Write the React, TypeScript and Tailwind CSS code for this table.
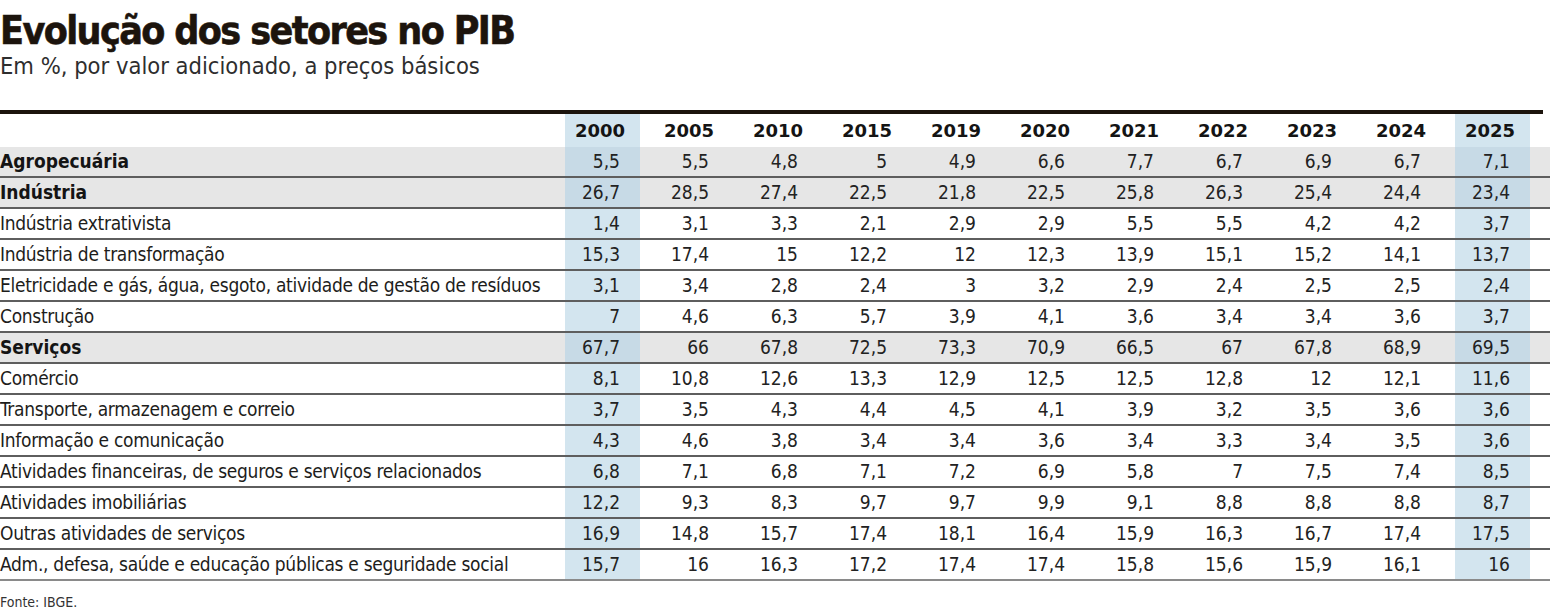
const years = ["2000", "2005", "2010", "2015", "2019", "2020", "2021", "2022", "2023", "2024", "2025"];

interface Row {
  label: string;
  values: string[];
  section?: boolean;
}

const rows: Row[] = [
  { label: "Agropecuária", section: true, values: ["5,5", "5,5", "4,8", "5", "4,9", "6,6", "7,7", "6,7", "6,9", "6,7", "7,1"] },
  { label: "Indústria", section: true, values: ["26,7", "28,5", "27,4", "22,5", "21,8", "22,5", "25,8", "26,3", "25,4", "24,4", "23,4"] },
  { label: "Indústria extrativista", values: ["1,4", "3,1", "3,3", "2,1", "2,9", "2,9", "5,5", "5,5", "4,2", "4,2", "3,7"] },
  { label: "Indústria de transformação", values: ["15,3", "17,4", "15", "12,2", "12", "12,3", "13,9", "15,1", "15,2", "14,1", "13,7"] },
  { label: "Eletricidade e gás, água, esgoto, atividade de gestão de resíduos", values: ["3,1", "3,4", "2,8", "2,4", "3", "3,2", "2,9", "2,4", "2,5", "2,5", "2,4"] },
  { label: "Construção", values: ["7", "4,6", "6,3", "5,7", "3,9", "4,1", "3,6", "3,4", "3,4", "3,6", "3,7"] },
  { label: "Serviços", section: true, values: ["67,7", "66", "67,8", "72,5", "73,3", "70,9", "66,5", "67", "67,8", "68,9", "69,5"] },
  { label: "Comércio", values: ["8,1", "10,8", "12,6", "13,3", "12,9", "12,5", "12,5", "12,8", "12", "12,1", "11,6"] },
  { label: "Transporte, armazenagem e correio", values: ["3,7", "3,5", "4,3", "4,4", "4,5", "4,1", "3,9", "3,2", "3,5", "3,6", "3,6"] },
  { label: "Informação e comunicação", values: ["4,3", "4,6", "3,8", "3,4", "3,4", "3,6", "3,4", "3,3", "3,4", "3,5", "3,6"] },
  { label: "Atividades financeiras, de seguros e serviços relacionados", values: ["6,8", "7,1", "6,8", "7,1", "7,2", "6,9", "5,8", "7", "7,5", "7,4", "8,5"] },
  { label: "Atividades imobiliárias", values: ["12,2", "9,3", "8,3", "9,7", "9,7", "9,9", "9,1", "8,8", "8,8", "8,8", "8,7"] },
  { label: "Outras atividades de serviços", values: ["16,9", "14,8", "15,7", "17,4", "18,1", "16,4", "15,9", "16,3", "16,7", "17,4", "17,5"] },
  { label: "Adm., defesa, saúde e educação públicas e seguridade social", values: ["15,7", "16", "16,3", "17,2", "17,4", "17,4", "15,8", "15,6", "15,9", "16,1", "16"] },
];

const isHighlight = (i: number) => i === 0 || i === years.length - 1;

export default function App() {
  return (
    <div className="w-[1550px] h-[609px] overflow-hidden bg-white text-[#1d1d1b] font-['DejaVu_Sans_Condensed','DejaVu_Sans',sans-serif]">
      {/* Title */}
      <h1 className="pt-[11px] text-[39px] leading-[40px] font-bold tracking-[-1.6px] text-[#1c140d] [-webkit-text-stroke:0.6px_#1c140d]">
        Evolução dos setores no PIB
      </h1>
      <p className="mt-[2px] text-[23.5px] leading-[26px] text-[#2e2e2e]">Em %, por valor adicionado, a preços básicos</p>

      <div className="mt-[31px] w-[1543px] h-[4px] bg-[#1c140d]" />

      {/* Header */}
      <div className="grid grid-cols-[565px_repeat(11,89px)] h-[33px]">
        <div />
        {years.map((y, i) => (
          <div
            key={y}
            className={`w-[75px] h-full flex items-center justify-end pr-[15px] text-[18px] font-bold font-['DejaVu_Sans',sans-serif] text-[#141414] ${
              isHighlight(i) ? "bg-[#d3e5ef]" : ""
            }`}
          >
            {y}
          </div>
        ))}
      </div>

      {/* Rows */}
      <div>
        {rows.map((row, ri) => {
          const last = ri === rows.length - 1;
          return (
            <div
              key={row.label}
              className={`grid grid-cols-[565px_repeat(11,89px)] h-[31px] border-b-2 ${
                last ? "border-[#8a8a8a]" : "border-[#5e5e5e]"
              } ${row.section ? "bg-[#e6e6e6]" : "bg-white"}`}
            >
              <div
                className={`flex items-center whitespace-nowrap text-[19px] ${
                  row.section ? "font-bold text-[#141414]" : "tracking-[-0.3px]"
                }`}
              >
                {row.label}
              </div>
              {row.values.map((v, i) => (
                <div
                  key={i}
                  className={`w-[75px] h-full flex items-center justify-end pr-[20px] text-[19px] text-[#222] ${
                    isHighlight(i) ? (row.section ? "bg-[#c7dae6]" : "bg-[#d3e5ef]") : ""
                  }`}
                >
                  {v}
                </div>
              ))}
            </div>
          );
        })}
      </div>

      <p className="mt-[15px] text-[14px] leading-[13px] text-[#333]">Fonte: IBGE.</p>
    </div>
  );
}
